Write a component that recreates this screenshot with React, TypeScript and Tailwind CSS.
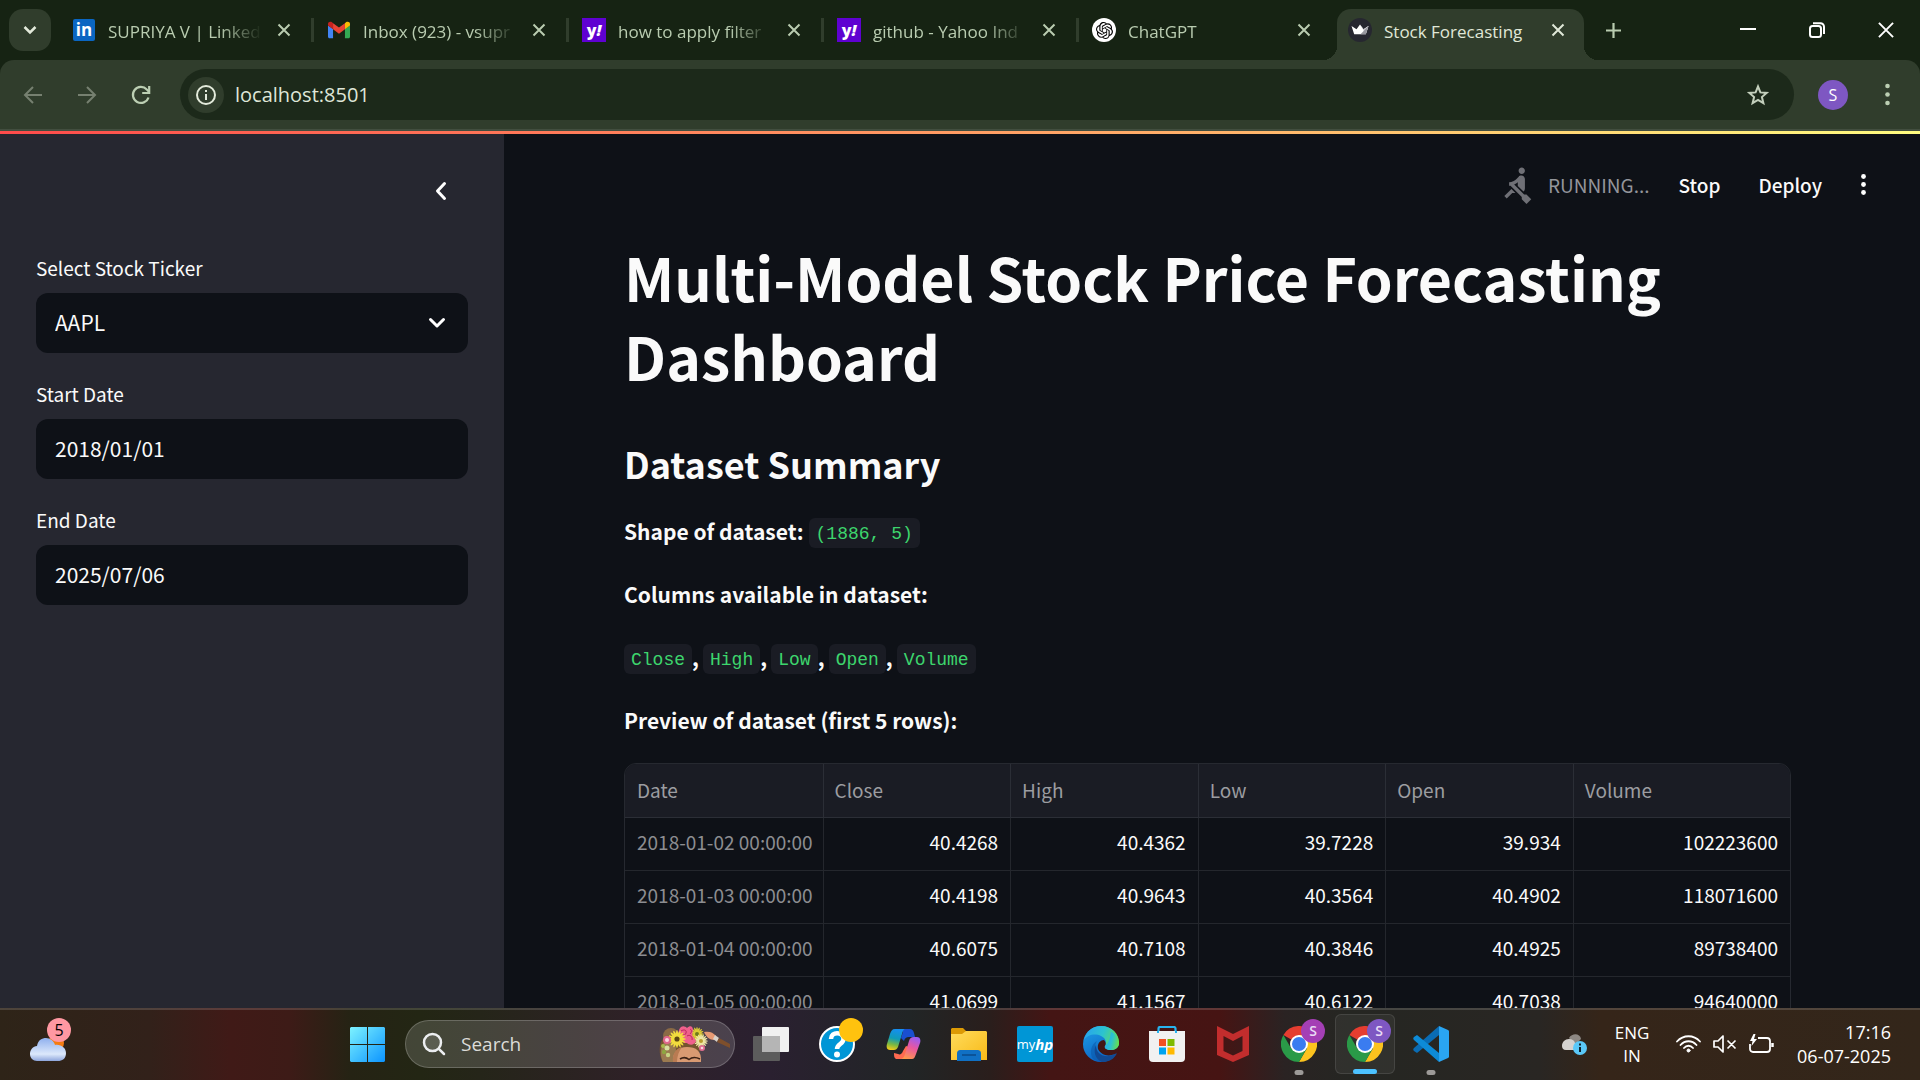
import React from "react";
import { SiOpenai } from "react-icons/si";

const SOURCE = "font-['Noto_Sans_CJK_SC','Noto_Sans',sans-serif]";
const UI = "font-['Open_Sans','Noto_Sans',sans-serif]";

/* ---------- browser icons ---------- */

function Cross({ size, width }: { size: number; width: number }) {
  return (
    <svg width={size} height={size} viewBox="0 0 14 14" fill="none" stroke="currentColor" strokeWidth={width}>
      <path d="M1.500 1.500l11 11M12.500 1.500l-11 11" />
    </svg>
  );
}

function GmailIcon() {
  return (
    <svg width="22" height="22" viewBox="0 0 24 24">
      <path d="M0 7v12.3c0 .9.7 1.7 1.7 1.7H5.5V11z" fill="#4285f4" />
      <path d="M24 7v12.3c0 .9-.7 1.7-1.7 1.7H18.5V11z" fill="#34a853" />
      <path d="M18.5 4.6v6.6L24 7V5.4c0-2.2-2.4-3.2-4.1-2z" fill="#fbbc04" />
      <path d="M5.5 11.2V4.6L12 9.4l6.5-4.8v6.6L12 16z" fill="#ea4335" />
      <path d="M0 5.4V7l5.5 4.2V4.6L4.1 3.4C2.400 2.200 0 3.200 0 5.400z" fill="#c5221f" />
    </svg>
  );
}

function LinkedinIcon() {
  return (
    <span className="flex h-[22px] w-[22px] items-center justify-center rounded-xs bg-[#0a66c2] font-['Open_Sans',sans-serif] text-[17px] leading-[20px] font-bold text-white">
      in
    </span>
  );
}

function YahooIcon() {
  return (
    <span className="flex h-6 w-6 items-center justify-center bg-[#5f01d1] font-['Open_Sans',sans-serif] text-[16px] leading-[20px] font-extrabold text-white">
      y<i>!</i>
    </span>
  );
}

function ChatIcon() {
  return (
    <span className="flex h-6 w-6 items-center justify-center rounded-full bg-white text-black">
      <SiOpenai size={17} />
    </span>
  );
}

function CrownIcon() {
  return (
    <svg width="24" height="24" viewBox="0 0 24 24">
      <circle cx="12" cy="12" r="12" fill="#262730" />
      <path d="M3.500 8l5 3.200L12 6.500l3.500 4.700 5-3.200-2.700 8.300H6.200z" fill="#fff" />
      <path d="M12 6.500l3.500 4.700 5-3.200-2.700 8.300z" fill="#c9c9cf" />
      <path d="M20.500 8l-8 8.300h5.300z" fill="#97979f" />
    </svg>
  );
}

const TABS: { title: string; icon: React.ReactNode }[] = [
  { title: "SUPRIYA V | Linked", icon: <LinkedinIcon /> },
  { title: "Inbox (923) - vsupr", icon: <GmailIcon /> },
  { title: "how to apply filter", icon: <YahooIcon /> },
  { title: "github - Yahoo Ind", icon: <YahooIcon /> },
  { title: "ChatGPT", icon: <ChatIcon /> },
];

function TabStrip() {
  return (
    <header className="flex h-[60px] shrink-0 items-center pl-[9px] text-[#b9ccb0]">
      <button aria-label="Search tabs" className="flex h-[42px] w-[42px] shrink-0 items-center justify-center rounded-[14px] bg-[#303d2c] text-[#e3eadb]">
        <svg width="14" height="14" viewBox="0 0 14 14" fill="none" stroke="currentColor" strokeWidth="2.500">
          <path d="M1.500 4l5.500 5.500L12.500 4" />
        </svg>
      </button>
      <div className="ml-2 flex items-center">
        {TABS.map((tab, i) => (
          <div key={i} className="flex w-[255px] items-center">
            <div className="flex min-w-0 flex-1 items-center pl-[13px]">
              <span className="flex w-6 shrink-0 justify-center">{tab.icon}</span>
              <span className="ml-3 w-[158px] pt-[3px] text-[17px] leading-6 whitespace-nowrap [mask-image:linear-gradient(to_right,black_112px,transparent_154px)]">
                {tab.title}
              </span>
            </div>
            <button aria-label="Close tab" className="flex w-7 shrink-0 justify-center">
              <Cross size={14} width={2} />
            </button>
            <span className={i < 4 ? "ml-[13px] h-6 w-[3px] bg-[#303d2c]" : "ml-[13px] h-6 w-[3px]"} />
          </div>
        ))}
      </div>
      <div className="relative ml-[3px] flex h-[51px] w-[247px] shrink-0 items-center self-end rounded-t-[14px] bg-[#303d2c] pb-[9px] pl-[11px] text-[#e0e8d8]">
        <span className="absolute bottom-0 -left-[14px] h-[14px] w-[14px] bg-[radial-gradient(circle_at_0_0,transparent_14px,#303d2c_14px)]" />
        <span className="absolute -right-[14px] bottom-0 h-[14px] w-[14px] bg-[radial-gradient(circle_at_100%_0,transparent_14px,#303d2c_14px)]" />
        <CrownIcon />
        <span className="ml-3 w-[160px] pt-[3px] text-[17px] leading-6 whitespace-nowrap">Stock Forecasting</span>
        <button aria-label="Close tab" className="flex w-7 justify-center">
          <Cross size={14} width={2} />
        </button>
      </div>
      <button aria-label="New tab" className="ml-[19px] flex w-5 justify-center">
        <svg width="17" height="17" viewBox="0 0 17 17" stroke="currentColor" strokeWidth="2.200">
          <path d="M8.500 1v15M1 8.500h15" />
        </svg>
      </button>
      <div className="ml-auto flex h-full text-white">
        <button aria-label="Minimize" className="flex w-[69px] items-center justify-center">
          <svg width="16" height="16" viewBox="0 0 16 16" stroke="currentColor" strokeWidth="2"><path d="M0 7h16" /></svg>
        </button>
        <button aria-label="Restore" className="flex w-[69px] items-center justify-center">
          <svg width="16" height="16" viewBox="0 0 16 16" fill="none" stroke="currentColor" strokeWidth="2">
            <rect x="1" y="4" width="11" height="11" rx="2.500" />
            <path d="M4 1.200h7.500A3.500 3.500 0 0 1 15 4.700V12" />
          </svg>
        </button>
        <button aria-label="Close" className="flex w-[69px] items-center justify-center">
          <Cross size={18} width={1.5} />
        </button>
      </div>
    </header>
  );
}

function Toolbar() {
  return (
    <div className="flex h-[71px] shrink-0 items-center rounded-t-[14px] border-b-2 border-[#424e3f] bg-[#303d2c] pl-[15px] text-[#bccfb3]">
      <button aria-label="Back" className="flex w-9 justify-center text-[#768070]">
        <svg width="20" height="20" viewBox="0 0 20 20" fill="none" stroke="currentColor" strokeWidth="2"><path d="M19 10H2M10 2l-8 8 8 8" /></svg>
      </button>
      <button aria-label="Forward" className="ml-[18px] flex w-9 justify-center text-[#768070]">
        <svg width="20" height="20" viewBox="0 0 20 20" fill="none" stroke="currentColor" strokeWidth="2"><path d="M1 10h17M10 2l8 8-8 8" /></svg>
      </button>
      <button aria-label="Reload" className="ml-[18px] flex w-9 justify-center">
        <svg width="20" height="20" viewBox="0 0 20 20" fill="none" stroke="currentColor" strokeWidth="2.200">
          <path d="M17.500 12.500A8 8 0 1 1 15.800 4.500L18 6.700" />
          <path d="M18.200 1v7h-7" />
        </svg>
      </button>
      <div className="ml-[21px] flex h-[51px] flex-1 items-center rounded-full bg-[#1c291a] pl-[8px]">
        <button aria-label="Site information" className="flex h-9 w-9 items-center justify-center rounded-full bg-[#303d2c] text-[#e3eadb]">
          <svg width="20" height="20" viewBox="0 0 20 20" fill="none" stroke="currentColor" strokeWidth="2">
            <circle cx="10" cy="10" r="9" />
            <path d="M10 9v6M10 5v2" />
          </svg>
        </button>
        <input aria-label="Address" defaultValue="localhost:8501" className="ml-[11px] min-w-0 flex-1 bg-transparent text-[20px] leading-7 text-[#dfe6d8] outline-none" />
        <button aria-label="Bookmark" className="mr-6 text-[#c3cfbc]">
          <svg width="24" height="24" viewBox="0 0 24 24" fill="none" stroke="currentColor" strokeWidth="2">
            <path d="M12 3.500l2.400 5.900 6.300.5-4.800 4.100 1.500 6.200L12 16.900l-5.400 3.300 1.500-6.200-4.800-4.100 6.300-.5z" />
          </svg>
        </button>
      </div>
      <button aria-label="Profile" className="ml-6 flex h-[30px] w-[30px] items-center justify-center rounded-full bg-[#7e57c2] text-[16px] leading-5 text-white">S</button>
      <button aria-label="Browser menu" className="mr-[21px] ml-[27px] flex w-6 justify-center">
        <svg width="5" height="23" viewBox="0 0 5 23" fill="currentColor"><circle cx="2.500" cy="3" r="2.300" /><circle cx="2.500" cy="11.500" r="2.300" /><circle cx="2.500" cy="20" r="2.300" /></svg>
      </button>
    </div>
  );
}

/* ---------- dashboard ---------- */

function Sidebar() {
  const field = "block h-[60px] w-full rounded-xl bg-[#0e1117] px-[19px] pb-[2px] text-[21px] leading-8 text-[#fafafa] outline-none";
  const label = "flex h-[42px] items-start text-[19px] leading-[34px] text-[#fafafa]";
  return (
    <aside className="w-[504px] shrink-0 bg-[#262730] px-9">
      <div className="flex h-[117px] items-start justify-end pt-[45px] pr-[15px]">
        <button aria-label="Collapse sidebar" className="flex h-6 w-6 items-center justify-center">
          <svg width="12" height="20" viewBox="0 0 12 20" fill="none" stroke="#fff" strokeWidth="3" strokeLinecap="round" strokeLinejoin="round"><path d="M9.500 2.500L2.500 10l7 7.500" /></svg>
        </button>
      </div>
      <div className="flex flex-col gap-6">
        <div>
          <label htmlFor="ticker" className={label}>Select Stock Ticker</label>
          <div className="relative">
            <select id="ticker" defaultValue="AAPL" className={`${field} appearance-none`}>
              <option>AAPL</option>
            </select>
            <svg className="pointer-events-none absolute top-[23px] right-[22px]" width="18" height="14" viewBox="0 0 18 14" fill="none" stroke="#fff" strokeWidth="3" strokeLinecap="round" strokeLinejoin="round"><path d="M2.500 3.500L9 10l6.500-6.500" /></svg>
          </div>
        </div>
        <div>
          <label htmlFor="start" className={label}>Start Date</label>
          <input id="start" className={field} defaultValue="2018/01/01" />
        </div>
        <div>
          <label htmlFor="end" className={label}>End Date</label>
          <input id="end" className={field} defaultValue="2025/07/06" />
        </div>
      </div>
    </aside>
  );
}

function Code({ children }: { children: React.ReactNode }) {
  return (
    <code className="mt-[3px] flex h-[30px] items-center rounded-md bg-[#1a1c24] px-[7px] pt-[2px] font-['Liberation_Mono',monospace] text-[18px] leading-7 font-normal text-[#3dd56d]">
      {children}
    </code>
  );
}

const COLUMNS = ["Close", "High", "Low", "Open", "Volume"];

const ROWS = [
  ["2018-01-02 00:00:00", "40.4268", "40.4362", "39.7228", "39.934", "102223600"],
  ["2018-01-03 00:00:00", "40.4198", "40.9643", "40.3564", "40.4902", "118071600"],
  ["2018-01-04 00:00:00", "40.6075", "40.7108", "40.3846", "40.4925", "89738400"],
  ["2018-01-05 00:00:00", "41.0699", "41.1567", "40.6122", "40.7038", "94640000"],
];

function DataTable() {
  return (
    <div className="mt-6 overflow-hidden rounded-t-xl border border-[#262930]">
      <table className="w-full table-fixed border-collapse text-[19px] leading-7">
        <colgroup>
          <col className="w-[17%]" />
          <col className="w-[16.1%]" />
          <col className="w-[16.1%]" />
          <col className="w-[16.1%]" />
          <col className="w-[16.1%]" />
          <col />
        </colgroup>
        <thead>
          <tr className="h-[53px] bg-[#1a1c24] text-left text-[#9c9da1]">
            {["Date", ...COLUMNS].map((name) => (
              <th key={name} scope="col" className="border-r border-b border-[#2b2e36] px-[11px] font-normal first:pl-3 last:border-r-0">{name}</th>
            ))}
          </tr>
        </thead>
        <tbody>
          {ROWS.map((row) => (
            <tr key={row[0]} className="h-[53px]">
              {row.map((cell, i) => (
                <td key={i} className={i === 0 ? "border-r border-b border-[#24272d] pb-[3px] pl-3 whitespace-nowrap text-[#8c8d91]" : "border-r border-b border-[#24272d] px-3 pb-[3px] text-right text-[#fafafa] last:border-r-0"}>{cell}</td>
              ))}
            </tr>
          ))}
        </tbody>
      </table>
    </div>
  );
}

function Dashboard() {
  return (
    <main className="flex min-w-0 flex-1 flex-col overflow-hidden bg-[#0e1117] text-[#fafafa]">
      <div className="flex h-[103px] shrink-0 items-center justify-end pr-[45px] pb-[2px] text-[19px] leading-8">
        <svg width="38" height="38" viewBox="0 0 24 24" fill="#6f7076">
          <path d="M8.500 14.500L4 19l1.500 1.500L9 17h2l-2.500-2.500zM15 1c-1.100 0-2 .9-2 2s.9 2 2 2 2-.9 2-2-.9-2-2-2zm6 20.010L18 24l-2.990-3.010V19.500l-7.100-7.090c-.31.05-.61.07-.91.07v-2.160c1.660.03 3.610-.87 4.670-2.040l1.400-1.550c.19-.21.43-.38.69-.5.29-.14.62-.23.96-.23h.03C15.990 6.010 17 7.020 17 8.260v5.750c0 .84-.35 1.610-.92 2.160l-3.580-3.580v-2.270c-.63.52-1.430 1.020-2.290 1.390L16.500 18H18l3 3.010z" />
        </svg>
        <span className="ml-3 text-[#94959b]">RUNNING...</span>
        <button className="ml-[29px] font-medium">Stop</button>
        <button className="ml-[38px] font-medium">Deploy</button>
        <button aria-label="Main menu" className="ml-[29px] flex w-6 justify-center">
          <svg width="5" height="21" viewBox="0 0 5 21" fill="#fff"><circle cx="2.500" cy="2.500" r="2.400" /><circle cx="2.500" cy="10.500" r="2.400" /><circle cx="2.500" cy="18.500" r="2.400" /></svg>
        </button>
      </div>
      <div className="shrink-0 pr-[129px] pl-[120px]">
        <h1 className="text-[59px] leading-[79px] font-bold">Multi-Model Stock Price Forecasting Dashboard</h1>
        <h2 className="mt-[43px] text-[36px] leading-[50px] font-semibold">Dataset Summary</h2>
        <div className="mt-6 flex flex-col gap-[25px] text-[21px] leading-[38px] font-bold">
          <p className="flex items-center gap-[5px]">Shape of dataset: <Code>(1886, 5)</Code></p>
          <p>Columns available in dataset:</p>
          <p className="flex items-center">
            {COLUMNS.map((name, i) => (
              <span key={name} className="flex items-center">
                <Code>{name}</Code>
                {i < 4 && <span className="w-[11px]">,</span>}
              </span>
            ))}
          </p>
          <p>Preview of dataset (first 5 rows):</p>
        </div>
        <DataTable />
      </div>
    </main>
  );
}

/* ---------- taskbar icons ---------- */

function WindowsIcon() {
  return (
    <svg width="35" height="35" viewBox="0 0 35 35">
      <defs>
        <linearGradient id="win" x1="0" y1="0" x2="1" y2="1"><stop offset="0" stopColor="#7df3ff" /><stop offset="1" stopColor="#0c94ff" /></linearGradient>
      </defs>
      <path d="M1 0h16v17H0V1zM18 0h16l1 1v16H18zM0 18h17v17H1l-1-1zM18 18h17v16l-1 1H18z" fill="url(#win)" />
    </svg>
  );
}

function FlowerArt() {
  const daisy = (cx: number, cy: number, r: number, fill: string, core: string) => (
    <g key={`${cx}-${cy}`}>
      {[0, 22, 45, 67, 90, 112, 135, 157].map((a) => (
        <ellipse key={a} cx={cx} cy={cy} rx={r} ry={r / 6} fill={fill} transform={`rotate(${a} ${cx} ${cy})`} />
      ))}
      <circle cx={cx} cy={cy} r={r / 3.5} fill={core} />
    </g>
  );
  return (
    <svg width="72" height="36" viewBox="0 0 72 36">
      <circle cx="12" cy="10" r="8" fill="#8a6a45" />
      <path d="M2 16C6 8 20 6 30 8c10 1 15 8 13 16L20 36H4C0 30 0 22 2 16z" fill="#75542f" />
      <path d="M4 18c3-4 8-6 12-5l2 23H4c-3-6-3-12 0-18z" fill="#9b7a50" />
      <path d="M14 36c-1-9 5-15 14-15s15 4 14 15z" fill="#d99a72" />
      <path d="M14 36c-1-9 4-14 9-15-3 4-5 9-5 15z" fill="#b97b52" />
      <path d="M21 33c3-2 6-2 9 .5 3-2.500 7-2.500 11-.5" stroke="#3b2115" strokeWidth="1.600" fill="none" />
      {daisy(38, 8, 7, "#dccb35", "#6f7a1d")}
      {daisy(42, 15, 7, "#ece6a4", "#b79c2e")}
      <path d="M20 4c2-5 6-4 8-2 3-3 6-2 6 2l-1 5 4 6c-2 5-7 4-9 2-5 0-7-3-6-6-3-1-3-4-2-7z" fill="#f0608c" />
      <path d="M22 5c3-2 6-1 5 2s-3 2-4 1M28 10c3-2 6 1 5 4M31 3c2 1 2 3 0 5" stroke="#b92c59" fill="none" />
      {daisy(18, 13, 9, "#f2dc3e", "#5d4712")}
      <circle cx="8" cy="14" r="4" fill="#e0668c" /><circle cx="8" cy="14" r="2" fill="#fbd4df" />
      <circle cx="43" cy="22" r="3" fill="#dd6b8f" /><circle cx="43" cy="22" r="1.300" fill="#fbd4df" />
      <circle cx="4" cy="20" r="2" fill="#a6bc4c" /><circle cx="8" cy="22" r="2.500" fill="#d9dfa0" /><circle cx="5" cy="26" r="2.200" fill="#8fa641" /><circle cx="9" cy="29" r="2.200" fill="#c6d382" />
      <path d="M45 6c5-1 9 0 12 4l-2 4c-4 0-8-3-10-8z" fill="#e79a73" />
      <path d="M56 9l4 3-2 4-4-3z" fill="#d8d2ca" />
      <path d="M60 12l11 6v4l-13-6z" fill="#7e4f2c" />
    </svg>
  );
}

function HelpIcon() {
  return (
    <span className="relative flex h-9 w-9 items-center justify-center">
      <svg width="36" height="36" viewBox="0 0 36 36" fill="none">
        <circle cx="18" cy="18" r="17" fill="#0096d6" stroke="#fff" strokeWidth="2" />
        <path d="M12 13c0-8 12.500-7.500 12.500 0 0 5-6.500 5-6.500 10" stroke="#fff" strokeWidth="4.500" />
        <circle cx="18" cy="28.500" r="3" fill="#fff" />
      </svg>
      <span className="absolute -top-2 -right-2 h-6 w-6 rounded-full bg-[#ffc20e]" />
    </span>
  );
}

function CopilotIcon() {
  return (
    <svg width="36" height="36" viewBox="0 0 36 36">
      <defs>
        <linearGradient id="cpA" x1="0.500" y1="0" x2="0.300" y2="1"><stop offset="0" stopColor="#168ef0" /><stop offset="0.450" stopColor="#0f9bb8" /><stop offset="0.750" stopColor="#7db941" /><stop offset="1" stopColor="#f2cb1a" /></linearGradient>
        <linearGradient id="cpB" x1="0.700" y1="0" x2="0.300" y2="1"><stop offset="0" stopColor="#9b5cf2" /><stop offset="0.450" stopColor="#e957a0" /><stop offset="1" stopColor="#ff9a4a" /></linearGradient>
      </defs>
      <path d="M16 3h9c2 0 3 1 4 4l1 4h-6c-3 0-4 1-5 4l-3-3 2-6z" fill="#1a4fd0" />
      <path d="M11 33h9c3 0 4-2 5-5l2-6-6-2-3 5c-1 3-3 4-5 3l-4-1c0 3 0 5 2 6z" fill="#ff6a50" />
      <path d="M10 3h11c-3 0-3 2-4 5l-4 13c-1 2-2 3-4 3H5c-3 0-4-3-3-6L5 8c1-3 2-5 5-5z" fill="url(#cpA)" />
      <path d="M27 33H15c3 0 4-2 5-5l4-13c1-3 2-4 5-4h3c3 0 4 3 3 6l-4 11c-1 3-2 5-4 5z" fill="url(#cpB)" />
    </svg>
  );
}

function FolderIcon() {
  return (
    <svg width="36" height="33" viewBox="0 0 36 33">
      <defs><linearGradient id="fold" x1="0" y1="0" x2="1" y2="1"><stop offset="0" stopColor="#ffdc5c" /><stop offset="1" stopColor="#f8b917" /></linearGradient></defs>
      <path d="M0 1l1-1h11l4 4v5H0z" fill="#dc9a05" />
      <path d="M0 6h11l4-3h20l1 1v28H0z" fill="url(#fold)" />
      <path d="M6 33v-7c0-3 1-4 4-4h16c3 0 4 1 4 4v7z" fill="#1070c4" />
      <path d="M11 27h14" stroke="#0a4a8a" strokeWidth="1.500" />
    </svg>
  );
}

function EdgeIcon() {
  return (
    <svg width="36" height="36" viewBox="0 0 36 36">
      <defs>
        <linearGradient id="edA" x1="0" y1="0.300" x2="1" y2="0.600"><stop offset="0" stopColor="#28a4ee" /><stop offset="0.500" stopColor="#2cc3cf" /><stop offset="1" stopColor="#68e04a" /></linearGradient>
        <linearGradient id="edB" x1="0" y1="0" x2="0.500" y2="1"><stop offset="0" stopColor="#1ea2e8" /><stop offset="1" stopColor="#0c62c4" /></linearGradient>
      </defs>
      <circle cx="18" cy="18" r="18" fill="url(#edB)" />
      <path d="M1 14C3 5 10 0 18 0c11 0 18 8 18 16 0 6-4 8-8 8-5 0-7-2-6-4 2-3 1-8-4-10C12 7 4 9 1 14z" fill="url(#edA)" />
      <path d="M14 15c-5 8 1 19 10 20-4 1-10 1-14-2-4-6-2-15 4-18z" fill="#0b57a8" opacity="0.550" />
      <path d="M13 19c0 10 10 14 19 9 1-1 2 0 1 1-4 6-9 7-14 7-7-3-9-11-6-17z" fill="#114a94" />
      <path d="M22 20c-1 2 1 4 6 4 4 0 7-2 8-5 1 4-1 8-4 9-7 3-14 1-17-5-1-5 2-9 6-9 2 2 2 4 1 6z" fill="#431614" />
      <path d="M28 24c4 0 7-2 8-6-1-8-4-11-8-12-1 6-2 11-6 14-1 2 1 4 6 4z" fill="url(#edA)" />
    </svg>
  );
}

function StoreIcon() {
  return (
    <svg width="36" height="36" viewBox="0 0 36 36">
      <path d="M9.500 8V2.500A1.500 1.500 0 0 1 11 1h14a1.500 1.500 0 0 1 1.500 1.500V8" fill="none" stroke="#27b3ef" strokeWidth="2.200" />
      <path d="M0 5h36v27a4 4 0 0 1-4 4H4a4 4 0 0 1-4-4z" fill="#f1f1f1" />
      <path d="M9 7V5M27 7V5" stroke="#27b3ef" strokeWidth="2" />
      <path d="M10 13h7v7h-7z" fill="#f25022" /><path d="M18.500 13h7v7h-7z" fill="#7fba00" />
      <path d="M10 21.500h7v7h-7z" fill="#00a4ef" /><path d="M18.500 21.500h7v7h-7z" fill="#ffb900" />
    </svg>
  );
}

function McafeeIcon() {
  return (
    <svg width="32" height="36" viewBox="0 0 32 36">
      <path d="M0 0l16 8 16-8v29l-16 7-16-7zM6.500 10v15l9.500 4.500 9.500-4.500V10L16 15z" fill="#c22d2d" fillRule="evenodd" />
    </svg>
  );
}

function ChromeIcon({ badge }: { badge: string }) {
  return (
    <span className="relative block h-9 w-9">
      <svg width="36" height="36" viewBox="0 0 36 36">
        <path d="M18 18L2.400 9A18 18 0 0 1 33.600 9z" fill="#e53d30" />
        <path d="M18 9h15.600A18 18 0 0 1 18 36l7.800-13.500z" fill="#fcc31e" />
        <path d="M25.800 22.500L18 36A18 18 0 0 1 2.400 9l7.800 13.500z" fill="#2a9a48" />
        <circle cx="18" cy="18" r="9" fill="#fff" />
        <circle cx="18" cy="18" r="7" fill="#3a7cf0" />
      </svg>
      <span className={`absolute -top-[7px] -right-2 flex h-6 w-6 items-center justify-center rounded-full text-[14px] leading-5 font-semibold text-[#eadcf5] ${badge}`}>S</span>
    </span>
  );
}

function VscodeIcon() {
  return (
    <svg width="36" height="36" viewBox="0 0 36 36">
      <path d="M26 0v9L4 27l-3-2c-1-1-1-2 0-3z" fill="#0a6cb4" />
      <path d="M26 36v-9L4 9l-3 2c-1 1-1 2 0 3z" fill="#0d8bd8" />
      <path d="M26 0l9 4c1 .5 1 1 1 2v24c0 1 0 1.500-1 2l-9 4z" fill="#2aa5f2" />
    </svg>
  );
}

function Cell({ label, active, mark, children }: { label: string; active?: boolean; mark?: string; children: React.ReactNode }) {
  return (
    <button
      aria-label={label}
      className={`relative mx-[3px] flex h-[60px] w-[60px] items-center justify-center rounded-md ${active ? "border border-white/10 bg-white/5" : ""}`}
    >
      {children}
      {mark && <span className={`absolute -bottom-px left-1/2 h-[5px] -translate-x-1/2 rounded-full ${mark}`} />}
    </button>
  );
}

function Taskbar() {
  return (
    <footer className="flex h-[72px] shrink-0 items-center border-t-2 border-white/15 bg-[linear-gradient(to_right,#2e2418_0px,#32211a_150px,#401a17_230px,#3d1b17_290px,#252314_350px,#232614_420px,#252519_480px,#2f2128_640px,#2a2030_770px,#212526_910px,#2a1e1c_990px,#441514_1050px,#461413_1220px,#2a2323_1285px,#252622_1350px,#292623_1540px,#352519_1600px,#33261a_1920px)] pb-[2px] text-white">
      <div className="flex w-[334px] shrink-0 pl-[30px]">
        <button aria-label="Weather" className="relative flex h-10 w-9 items-end">
          <svg width="36" height="28" viewBox="0 0 36 28">
            <defs><linearGradient id="cloud" x1="0" y1="0" x2="0" y2="1"><stop offset="0" stopColor="#8fb0ee" /><stop offset="0.700" stopColor="#dce8fb" /><stop offset="1" stopColor="#8ea6dc" /></linearGradient></defs>
            <circle cx="26" cy="7" r="8" fill="#f57c12" />
            <path d="M7 10C8 4 12 2 16 2c4 0 8 3 9 7 6-1 11 3 11 8 0 6-4 8-8 8H7c-4 0-7-3-7-7s3-8 7-8z" fill="url(#cloud)" />
          </svg>
          <span className="absolute -top-[6px] -right-[5px] flex h-6 w-6 items-center justify-center rounded-full bg-[#ff98a2] text-[16px] leading-5 text-black">5</span>
        </button>
      </div>
      <div className="flex items-center">
        <button aria-label="Start" className="flex h-[60px] w-[66px] items-center justify-center"><WindowsIcon /></button>
        <div className="ml-[5px] flex h-12 w-[330px] items-center overflow-hidden rounded-full border border-white/20 bg-white/15 pl-[16px]">
          <svg width="24" height="24" viewBox="0 0 24 24" fill="none" stroke="#eceef0" strokeWidth="2.500" strokeLinecap="round"><circle cx="10.500" cy="10.500" r="8.500" fill="#ffffff20" /><path d="M16.800 16.800L22 22" /></svg>
          <input aria-label="Search" placeholder="Search" className="ml-[15px] w-[198px] bg-transparent text-[19px] leading-6 placeholder:text-[#dcdcd8] outline-none" />
          <FlowerArt />
        </div>
        <div className="ml-[3px] flex items-center">
          <Cell label="Task view">
            <svg width="36" height="34" viewBox="0 0 36 34">
              <rect x="9" y="0" width="27" height="25" rx="1" fill="#f1f1f1" />
              <rect x="0" y="9" width="27" height="25" rx="1" fill="#5c5c5c" />
              <path d="M9 9h18v16H9z" fill="#b5b5b5" />
            </svg>
          </Cell>
          <Cell label="Help"><HelpIcon /></Cell>
          <Cell label="Copilot"><CopilotIcon /></Cell>
          <Cell label="File Explorer"><FolderIcon /></Cell>
          <Cell label="myHP">
            <span className="flex h-9 w-9 items-center justify-center rounded-xs bg-[#0096d6] text-[13px] leading-5">my<b className="text-[15px] italic">hp</b></span>
          </Cell>
          <Cell label="Edge"><EdgeIcon /></Cell>
          <Cell label="Store"><StoreIcon /></Cell>
          <Cell label="McAfee"><McafeeIcon /></Cell>
          <Cell label="Chrome" mark="w-[9px] bg-[#9d9a98]"><ChromeIcon badge="bg-[#a43fb5]" /></Cell>
          <Cell label="Chrome, active" active mark="w-6 bg-[#4cc2ff]"><ChromeIcon badge="bg-[#7e57c2]" /></Cell>
          <Cell label="Visual Studio Code" mark="w-[9px] bg-[#9d9a98]"><VscodeIcon /></Cell>
        </div>
      </div>
      <div className="ml-auto flex items-center pr-[29px] text-[18px] leading-6">
        <svg width="25" height="21" viewBox="0 0 25 21">
          <path d="M7 4c3-5 11-5 12 1l-6 6z" fill="#8d8883" />
          <path d="M0 12c0-4 3-7 7-7 3 0 5 1 6 4 3 0 4 7 0 7H4c-3 0-4-2-4-4z" fill="#d5d2cf" />
          <circle cx="18" cy="14" r="7" fill="#5ac8f8" />
          <path d="M18 13v5M18 9.500v2" stroke="#10222c" strokeWidth="2" />
        </svg>
        <button className="ml-[25px] flex w-10 flex-col items-center text-[17px] leading-[23px]"><span>ENG</span><span>IN</span></button>
        <button aria-label="Network, volume, battery" className="ml-6 flex items-center gap-3">
          <svg width="25" height="18" viewBox="0 0 25 18" fill="none" stroke="#fff" strokeWidth="1.800" strokeLinecap="round">
            <path d="M1 6.500c6.500-7 16.500-7 23 0M4.500 10c4.500-5 11.500-5 16 0M8 13c2.500-3 6.500-3 9 0" /><circle cx="12.500" cy="15.500" r="1.500" fill="#fff" strokeWidth="1" />
          </svg>
          <svg width="24" height="18" viewBox="0 0 24 18" fill="none" stroke="#fff" strokeWidth="1.700" strokeLinejoin="round">
            <path d="M1 6h4l5-5v16l-5-5H1zM14.500 5.500l8 8M22.500 5.500l-8 8" />
          </svg>
          <svg width="25" height="20" viewBox="0 0 25 20" fill="none" stroke="#fff" strokeWidth="1.800">
            <path d="M9 4h9a3 3 0 0 1 3 3v8a3 3 0 0 1-3 3H4a3 3 0 0 1-3-3v-5" /><path d="M23.500 9v4" strokeWidth="2.500" /><path d="M4.500 0L1 7h2.500l-1 5L8 5H5l1.500-5z" fill="#fff" stroke="none" />
          </svg>
        </button>
        <button className="flex w-[117px] flex-col items-end"><span>17:16</span><span>06-07-2025</span></button>
      </div>
    </footer>
  );
}

export default function App() {
  return (
    <div className={`flex h-screen flex-col overflow-hidden bg-[#162313] ${UI}`}>
      <TabStrip />
      <Toolbar />
      <div className="h-[3px] shrink-0 bg-[linear-gradient(to_right,#ff4b4b,#ffb56b_65%,#fffd80)]" />
      <div className={`flex min-h-0 flex-1 ${SOURCE}`}>
        <Sidebar />
        <Dashboard />
      </div>
      <Taskbar />
    </div>
  );
}
